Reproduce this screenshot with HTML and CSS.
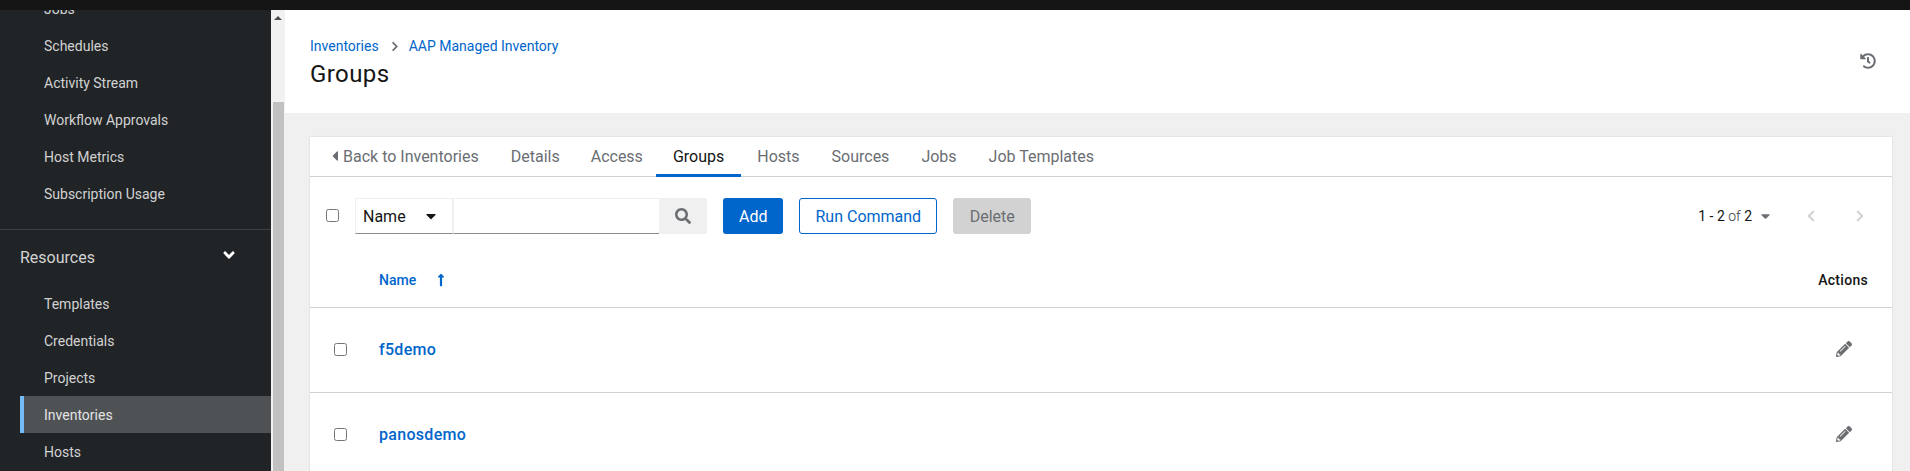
FILE: index.html
```html
<!DOCTYPE html>
<html lang="en">
<head>
<meta charset="utf-8">
<title>Groups</title>
<link rel="stylesheet" href="styles.css">
</head>
<body>
<div class="topbar"></div>
<div class="layout">
  <nav class="sidebar">
    <div class="nav-inner">
      <a class="nav-item">Jobs</a>
      <a class="nav-item">Schedules</a>
      <a class="nav-item">Activity Stream</a>
      <a class="nav-item">Workflow Approvals</a>
      <a class="nav-item">Host Metrics</a>
      <a class="nav-item">Subscription Usage</a>
      <div class="nav-divider"></div>
      <div class="nav-group">
        <span>Resources</span>
        <svg class="nav-chevron" viewBox="0 0 320 512"><path d="M143 352.3L7 216.3c-9.4-9.4-9.4-24.6 0-33.9l22.6-22.6c9.4-9.4 24.6-9.4 33.9 0l96.4 96.4 96.4-96.4c9.4-9.4 24.6-9.4 33.9 0l22.6 22.6c9.4 9.4 9.4 24.6 0 33.9l-136 136c-9.2 9.4-24.4 9.4-33.8 0z"/></svg>
      </div>
      <a class="nav-item">Templates</a>
      <a class="nav-item">Credentials</a>
      <a class="nav-item">Projects</a>
      <a class="nav-item active">Inventories</a>
      <a class="nav-item">Hosts</a>
    </div>
  </nav>
  <div class="scrollbar">
    <div class="scroll-arrow"></div>
    <div class="scroll-thumb"></div>
  </div>
  <main class="main">
    <header class="page-header">
      <div class="page-heading">
        <div class="breadcrumb">
          <a>Inventories</a>
          <svg class="crumb-sep" viewBox="0 0 320 512"><path d="M285.5 273L91.1 467.3c-9.4 9.4-24.6 9.4-33.9 0l-22.7-22.7c-9.4-9.4-9.4-24.6 0-33.9L188.5 256 34.5 101.3c-9.3-9.4-9.3-24.6 0-33.9l22.7-22.7c9.4-9.4 24.6-9.4 33.9 0L285.4 239c9.5 9.4 9.5 24.6.1 34z"/></svg>
          <a>AAP Managed Inventory</a>
        </div>
        <h1 class="title">Groups</h1>
      </div>
      <svg class="history" viewBox="0 0 512 512"><path d="M504 255.531c.253 136.64-111.18 248.372-247.82 248.468-59.015.042-113.223-20.53-155.822-54.911-11.077-8.94-11.905-25.541-1.839-35.607l11.267-11.267c8.609-8.609 22.353-9.551 31.891-1.984C173.062 425.135 212.781 440 256 440c101.705 0 184-82.311 184-184 0-101.705-82.311-184-184-184-48.814 0-93.149 18.969-126.068 49.932l50.754 50.754c10.08 10.08 2.941 27.314-11.313 27.314H24c-8.837 0-16-7.163-16-16V38.627c0-14.254 17.234-21.393 27.314-11.314l49.372 49.372C129.209 34.136 189.552 8 256 8c136.81 0 247.747 110.78 248 247.531zm-180.912 78.784l9.823-12.63c8.138-10.463 6.253-25.542-4.21-33.679L288 256.349V152c0-13.255-10.745-24-24-24h-16c-13.255 0-24 10.745-24 24v135.651l65.409 50.874c10.463 8.137 25.541 6.253 33.679-4.21z"/></svg>
    </header>
    <section class="content">
      <div class="card">
        <div class="tabs">
          <a class="tab back"><svg class="back-caret" viewBox="0 0 192 512"><path d="M192 127.338v257.324c0 17.818-21.543 26.741-34.142 14.142L29.196 270.142c-7.81-7.81-7.81-20.474 0-28.284l128.662-128.662c12.599-12.6 34.142-3.676 34.142 14.142z"/></svg>Back to Inventories</a>
          <a class="tab details">Details</a>
          <a class="tab">Access</a>
          <a class="tab current">Groups</a>
          <a class="tab">Hosts</a>
          <a class="tab">Sources</a>
          <a class="tab">Jobs</a>
          <a class="tab">Job Templates</a>
        </div>
        <div class="toolbar">
          <input class="check" type="checkbox" aria-label="Select all">
          <div class="search">
            <div class="select">
              <span>Name</span>
              <svg class="select-caret" viewBox="0 0 320 512"><path d="M31.3 192h257.3c17.8 0 26.7 21.5 14.1 34.1L174.1 354.8c-7.8 7.8-20.5 7.8-28.3 0L17.2 226.1C4.6 213.5 13.5 192 31.3 192z"/></svg>
            </div>
            <input class="search-input" type="text" aria-label="Search">
            <div class="search-btn">
              <svg class="search-icon" viewBox="0 0 512 512"><path d="M505 442.7L405.3 343c-4.5-4.5-10.6-7-17-7H372c27.6-35.3 44-79.7 44-128C416 93.1 322.9 0 208 0S0 93.1 0 208s93.1 208 208 208c48.3 0 92.7-16.4 128-44v16.3c0 6.4 2.5 12.5 7 17l99.7 99.7c9.4 9.4 24.6 9.4 33.9 0l28.3-28.3c9.4-9.4 9.4-24.6.1-34zM208 336c-70.7 0-128-57.2-128-128 0-70.7 57.2-128 128-128 70.7 0 128 57.2 128 128 0 70.7-57.2 128-128 128z"/></svg>
            </div>
          </div>
          <div class="btn primary">Add</div>
          <div class="btn secondary">Run Command</div>
          <div class="btn disabled">Delete</div>
          <div class="pagination">
            <span class="page-count"><b>1 - 2</b> of <b>2</b></span>
            <svg class="page-caret" viewBox="0 0 320 512"><path d="M31.3 192h257.3c17.8 0 26.7 21.5 14.1 34.1L174.1 354.8c-7.8 7.8-20.5 7.8-28.3 0L17.2 226.1C4.6 213.5 13.5 192 31.3 192z"/></svg>
            <svg class="page-nav first" viewBox="0 0 320 512"><path d="M34.52 239.03L228.87 44.69c9.37-9.37 24.57-9.37 33.94 0l22.67 22.67c9.36 9.36 9.37 24.52.04 33.9L131.49 256l154.02 154.75c9.34 9.38 9.32 24.54-.04 33.9l-22.67 22.67c-9.37 9.37-24.57 9.37-33.94 0L34.52 272.97c-9.37-9.37-9.37-24.57 0-33.94z"/></svg>
            <svg class="page-nav" viewBox="0 0 320 512"><path d="M285.5 273L91.1 467.3c-9.4 9.4-24.6 9.4-33.9 0l-22.7-22.7c-9.4-9.4-9.4-24.6 0-33.9L188.5 256 34.5 101.3c-9.3-9.4-9.3-24.6 0-33.9l22.7-22.7c9.4-9.4 24.6-9.4 33.9 0L285.4 239c9.5 9.4 9.5 24.6.1 34z"/></svg>
          </div>
        </div>
        <div class="row head">
          <div class="cell-check"></div>
          <div class="cell-name head-name">Name
            <svg class="sort" viewBox="0 0 256 512"><path d="M88 166.059V468c0 6.627 5.373 12 12 12h56c6.627 0 12-5.373 12-12V166.059h46.059c21.382 0 32.09-25.851 16.971-40.971l-86.059-86.059c-9.373-9.373-24.569-9.373-33.941 0l-86.059 86.059c-15.119 15.119-4.411 40.971 16.971 40.971H88z"/></svg>
          </div>
          <div class="cell-actions head-actions">Actions</div>
        </div>
        <div class="row item">
          <div class="cell-check"><input class="check" type="checkbox" aria-label="Select f5demo"></div>
          <a class="cell-name link">f5demo</a>
          <div class="cell-actions"><svg class="pencil" viewBox="0 0 512 512"><path d="M497.9 142.1l-46.1 46.1c-4.7 4.7-12.3 4.7-17 0l-111-111c-4.7-4.7-4.7-12.3 0-17l46.1-46.1c18.7-18.7 49.1-18.7 67.9 0l60.1 60.1c18.8 18.7 18.8 49.1 0 67.9zM284.2 99.8L21.6 362.4.4 483.9c-2.9 16.4 11.4 30.6 27.8 27.8l121.5-21.3 262.6-262.6c4.7-4.7 4.7-12.3 0-17l-111-111c-4.8-4.7-12.4-4.7-17.1 0zM124.1 339.9c-5.5-5.5-5.5-14.3 0-19.8l154-154c5.5-5.5 14.3-5.5 19.8 0s5.5 14.3 0 19.8l-154 154c-5.5 5.5-14.3 5.5-19.8 0zM88 424h48v36.3l-64.5 11.3-31.1-31.1L51.7 376H88v48z"/></svg></div>
        </div>
        <div class="row item">
          <div class="cell-check"><input class="check" type="checkbox" aria-label="Select panosdemo"></div>
          <a class="cell-name link">panosdemo</a>
          <div class="cell-actions"><svg class="pencil" viewBox="0 0 512 512"><path d="M497.9 142.1l-46.1 46.1c-4.7 4.7-12.3 4.7-17 0l-111-111c-4.7-4.7-4.7-12.3 0-17l46.1-46.1c18.7-18.7 49.1-18.7 67.9 0l60.1 60.1c18.8 18.7 18.8 49.1 0 67.9zM284.2 99.8L21.6 362.4.4 483.9c-2.9 16.4 11.4 30.6 27.8 27.8l121.5-21.3 262.6-262.6c4.7-4.7 4.7-12.3 0-17l-111-111c-4.8-4.7-12.4-4.7-17.1 0zM124.1 339.9c-5.5-5.5-5.5-14.3 0-19.8l154-154c5.5-5.5 14.3-5.5 19.8 0s5.5 14.3 0 19.8l-154 154c-5.5 5.5-14.3 5.5-19.8 0zM88 424h48v36.3l-64.5 11.3-31.1-31.1L51.7 376H88v48z"/></svg></div>
        </div>
      </div>
    </section>
  </main>
</div>
</body>
</html>
```
FILE: styles.css
```css
* { box-sizing: border-box; }
html, body { height: 100%; }
body {
  margin: 0;
  overflow: hidden;
  display: flex;
  flex-direction: column;
  background: #f0f0f0;
  color: #151515;
  font-family: Roboto, "Liberation Sans", sans-serif;
  font-size: 16px;
}
svg { display: block; fill: currentColor; flex: none; }
a { text-decoration: none; }

.topbar { height: 10px; flex: none; background: #151515; position: relative; z-index: 1; }
.layout { flex: 1; min-height: 0; display: flex; overflow: hidden; }

.sidebar { width: 271px; flex: none; background: #212427; color: #d2d2d2; overflow: hidden; }
.nav-inner { margin-top: -20px; display: flex; flex-direction: column; }
.nav-item {
  height: 37px;
  margin-left: 20px;
  padding-left: 24px;
  display: flex;
  align-items: center;
  font-size: 14px;
}
.nav-item.active { background: #4f5255; color: #e4e4e4; border-left: 4px solid #73bcf7; padding-left: 20px; }
.nav-divider { height: 1px; margin-top: 17px; background: #3c3f42; }
.nav-group {
  height: 55px;
  padding: 0 36px 0 20px;
  display: flex;
  align-items: center;
  justify-content: space-between;
  font-size: 16px;
}
.nav-chevron { width: 12px; height: 18px; color: #fff; margin-top: -5px; }

.scrollbar { width: 14px; flex: none; background: #f1f1f1; display: flex; flex-direction: column; align-items: center; }
.scroll-arrow {
  margin-top: 6px;
  width: 0;
  height: 0;
  border-left: 4px solid transparent;
  border-right: 4px solid transparent;
  border-bottom: 4px solid #505050;
}
.scroll-thumb { margin-top: 82px; width: 11px; flex: 1; background: #c1c1c1; }

.main { flex: 1; min-width: 0; display: flex; flex-direction: column; }
.page-header {
  height: 103px;
  flex: none;
  background: #fff;
  padding: 27px 34px 0 25px;
  display: flex;
  justify-content: space-between;
}
.breadcrumb { display: flex; align-items: center; font-size: 14px; line-height: 18px; color: #06c; }
.crumb-sep { width: 8px; height: 11px; margin: 0 10px 0 12px; color: #6a6e73; }
.title { margin: 4px 0 0; font-size: 24px; font-weight: 400; line-height: 31px; letter-spacing: .4px; }
.history { width: 16px; height: 16px; margin-top: 16px; color: #6a6e73; }

.content { flex: 1; padding: 24px 18px 0 25px; overflow: hidden; }
.card { background: #fff; box-shadow: 0 0 2px rgba(3, 3, 3, .12); min-height: 400px; }

.tabs { height: 40px; display: flex; border-bottom: 1px solid #d2d2d2; padding-left: 8px; }
.tab {
  height: 40px;
  padding: 0 16px 2px;
  display: flex;
  align-items: center;
  color: #6a6e73;
  font-size: 16px;
  white-space: nowrap;
}
.tab.back { padding-left: 14px; }
.tab.details { padding-right: 15px; }
.tab.current {
  margin-left: -3px;
  padding: 1px 17px 0;
  color: #151515;
  border-bottom: 3px solid #06c;
}
.back-caret { width: 6px; height: 16px; margin-right: 5px; }

.toolbar { height: 76px; padding: 21px 28px 0 16px; display: flex; align-items: flex-start; }
.toolbar > .check { margin-top: 11px; }
.check { width: 13px; height: 13px; margin: 0; display: block; }
.search { display: flex; height: 36px; margin-left: 16px; }
.select {
  width: 99px;
  padding: 0 16px 0 7px;
  display: flex;
  align-items: center;
  justify-content: space-between;
  border: 1px solid #f0f0f0;
  border-bottom-color: #8a8d90;
  border-right-width: 2px;
}
.select-caret { width: 10px; height: 16px; }
.search-input {
  width: 205px;
  height: 36px;
  padding: 0 8px;
  border: 0;
  border-top: 1px solid #f0f0f0;
  border-bottom: 1px solid #8a8d90;
  border-radius: 0;
  outline: 0;
  background: #fff;
}
.search-btn { width: 48px; display: flex; align-items: center; justify-content: center; background: #f0f0f0; color: #6a6e73; }
.search-icon { width: 16px; height: 16px; }

.btn { height: 36px; padding: 0 16px; display: flex; align-items: center; border-radius: 3px; font-size: 16px; white-space: nowrap; }
.btn.primary { margin-left: 16px; background: #06c; color: #fff; }
.btn.secondary { margin-left: 16px; padding: 0 15px; border: 1px solid #06c; color: #06c; }
.btn.disabled { margin-left: 16px; padding: 0 16.5px; background: #d2d2d2; color: #6a6e73; }

.pagination { margin-left: auto; height: 36px; display: flex; align-items: center; font-size: 14px; }
.page-count { color: #3a3a3a; font-weight: 300; }
.page-count b { font-weight: 400; color: #151515; }
.page-caret { width: 9px; height: 14px; margin: 0 0 0 9px; color: #6a6e73; }
.page-nav { width: 8px; height: 14px; margin-left: 41px; color: #d2d2d2; }
.page-nav.first { margin-left: 37px; }

.row { display: flex; align-items: center; padding: 0 24px 0 24px; border-bottom: 1px solid #d2d2d2; }
.row.head { height: 55px; }
.row.item { height: 85px; padding-bottom: 2px; }
.cell-check { width: 45px; flex: none; }
.cell-name { flex: 1; }
.cell-actions { flex: none; display: flex; justify-content: flex-end; }
.head-name { display: flex; align-items: center; color: #06c; font-size: 14px; font-weight: 500; }
.sort { width: 8px; height: 14px; margin-left: 21px; }
.head-actions { font-size: 14px; font-weight: 500; letter-spacing: .3px; }
.link { color: #06c; font-weight: 500; letter-spacing: .3px; }
.pencil { width: 16px; height: 16px; margin-right: 16px; color: #6a6e73; }
```
